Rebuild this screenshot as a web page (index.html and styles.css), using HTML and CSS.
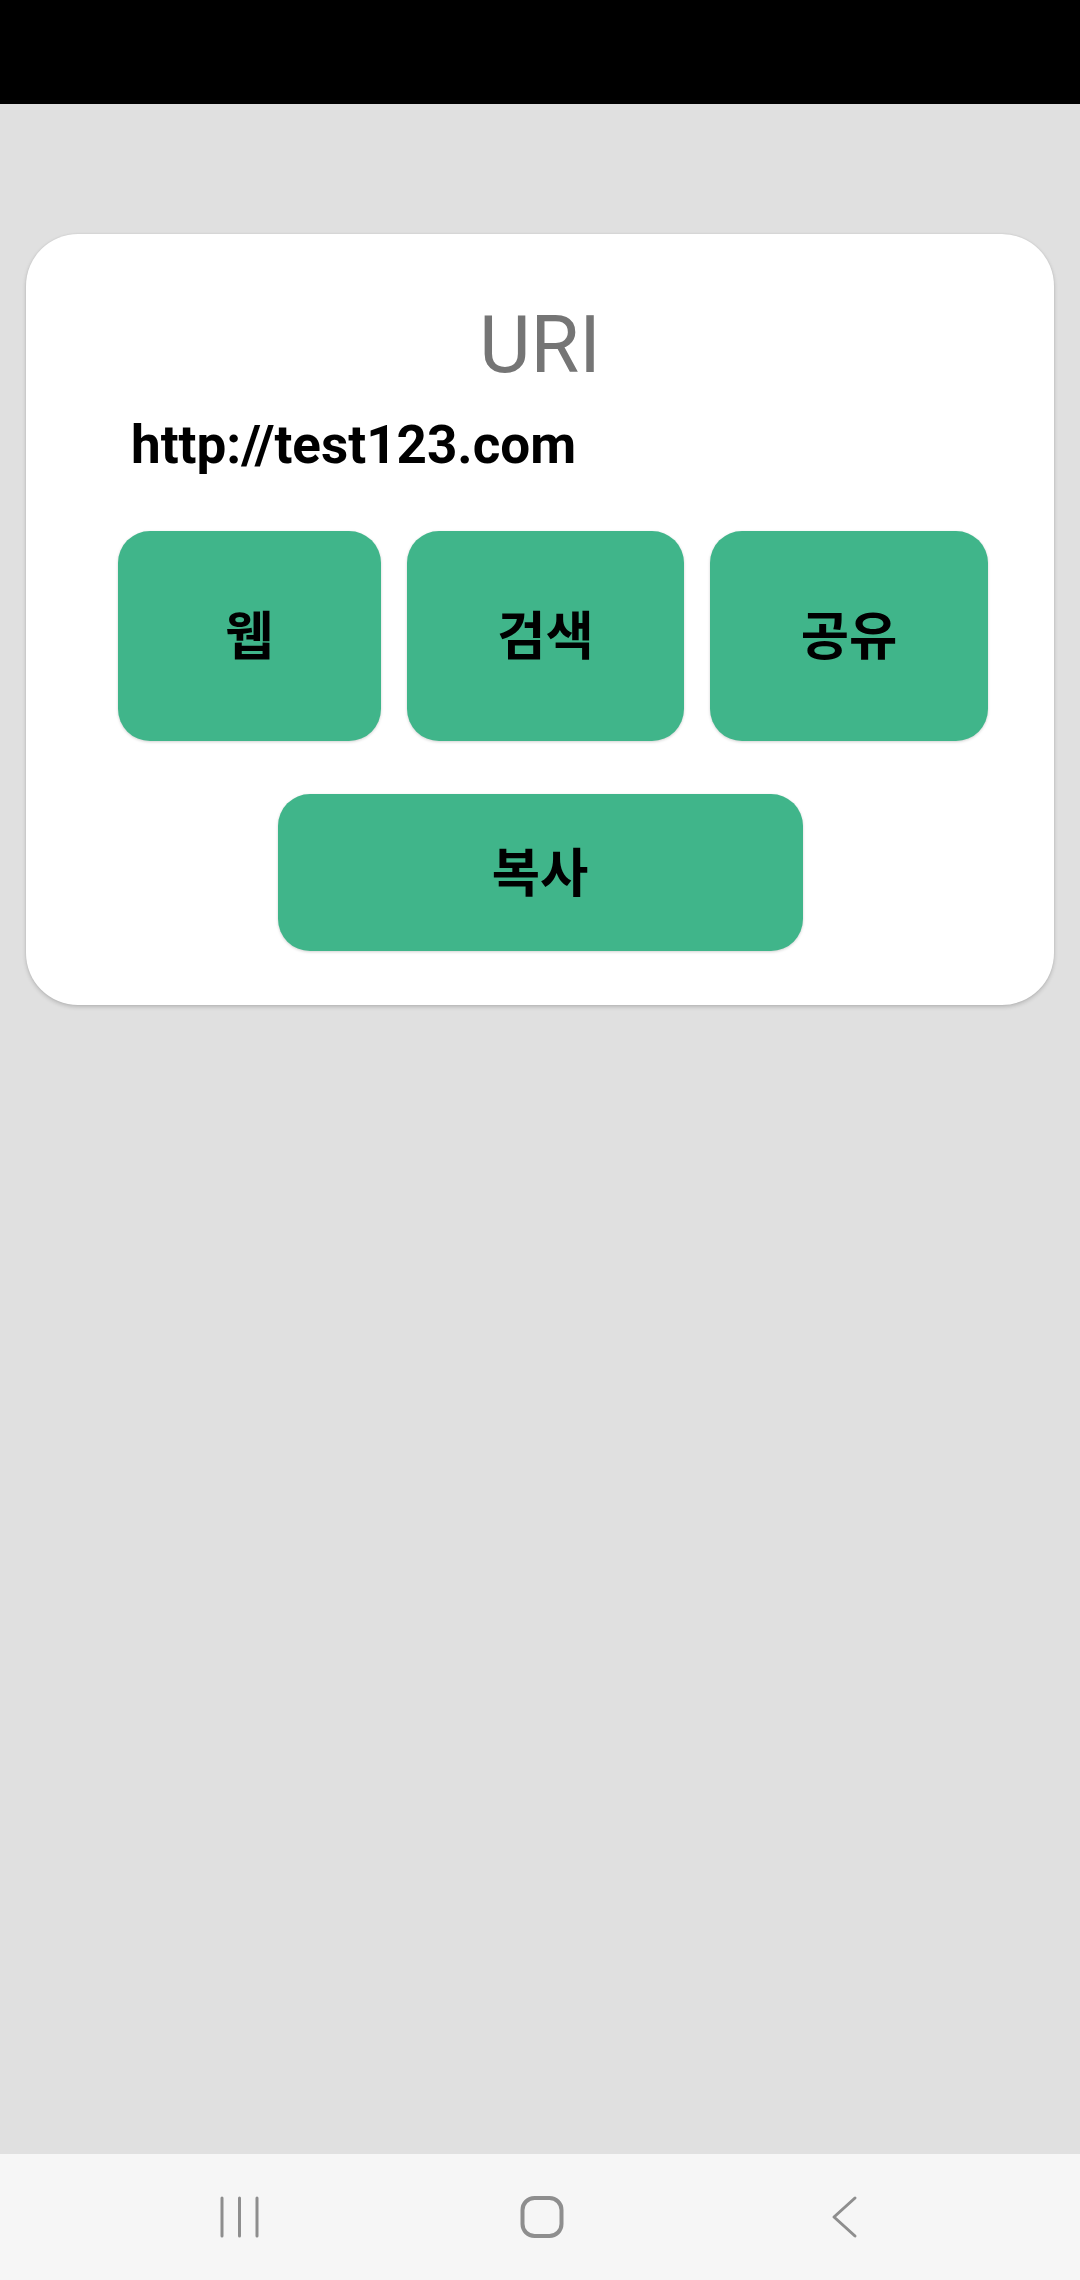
FILE: index.html
```html
<!DOCTYPE html>
<html lang="ko">
<head>
<meta charset="utf-8">
<title>URI</title>
<link rel="stylesheet" href="styles.css">
</head>
<body>
<div class="screen">
  <div class="status"></div>
  <main class="main">
    <section class="card">
      <h1 class="title">URI</h1>
      <p class="url">http://test123.com</p>
      <div class="row">
        <button class="btn btn-web">웹</button>
        <button class="btn btn-search">검색</button>
        <button class="btn btn-share">공유</button>
      </div>
      <button class="btn btn-copy">복사</button>
    </section>
  </main>
  <nav class="navbar">
    <div class="slot">
      <svg class="icon" width="48" height="48" viewBox="0 0 48 48">
        <path d="M7 5V43M24.5 5V43M42 5V43" fill="none" stroke="#8e8e8e" stroke-width="3" stroke-linecap="round"/>
      </svg>
    </div>
    <div class="slot">
      <svg class="icon" width="48" height="48" viewBox="0 0 48 48">
        <rect x="4.5" y="5" width="39" height="38" rx="12" fill="none" stroke="#8e8e8e" stroke-width="4"/>
      </svg>
    </div>
    <div class="slot">
      <svg class="icon" width="48" height="48" viewBox="0 0 48 48">
        <path d="M34 5L13 24L34 43" fill="none" stroke="#8e8e8e" stroke-width="3" stroke-linecap="round" stroke-linejoin="round"/>
      </svg>
    </div>
  </nav>
</div>
</body>
</html>
```

FILE: styles.css
```css
html, body {
  margin: 0;
  padding: 0;
}

body {
  width: 1080px;
  height: 2280px;
  overflow: hidden;
  font-family: Roboto, "Noto Sans CJK KR", sans-serif;
}

.screen {
  display: flex;
  flex-direction: column;
  height: 2280px;
}

.status {
  height: 104px;
  background: #000;
  flex: none;
}

.main {
  flex: 1;
  background: #e0e0e0;
  padding: 130px 26px 0;
}

.card {
  background: #fff;
  border-radius: 52px;
  padding: 65px 0 54px;
  box-shadow: 0 2px 4px rgba(0, 0, 0, 0.18), 0 0 2px rgba(0, 0, 0, 0.08);
}

.title {
  margin: 0;
  text-align: center;
  font-family: Roboto, sans-serif;
  font-weight: 400;
  font-size: 79px;
  line-height: 93px;
  color: #757575;
}

.url {
  margin: 22px 0 0;
  padding-left: 105px;
  font-family: Roboto, sans-serif;
  font-weight: 700;
  font-size: 53px;
  line-height: 62px;
  color: #000;
}

.row {
  display: flex;
  gap: 26px;
  margin-top: 55px;
  padding: 0 66px 0 92px;
}

.btn {
  border: 0;
  margin: 0;
  padding: 0 0 7px;
  background: #40b58a;
  border-radius: 32px;
  box-shadow: 0 1px 3px rgba(0, 0, 0, 0.18);
  display: flex;
  align-items: center;
  justify-content: center;
  font-family: "Noto Sans CJK KR", sans-serif;
  font-weight: 700;
  font-size: 52.5px;
  line-height: 1;
  color: #000;
}

.row .btn {
  height: 210px;
}

.btn-web {
  width: 263px;
}

.btn-search {
  width: 277px;
}

.btn-share {
  width: 278px;
}

.btn-copy {
  width: 525px;
  height: 157px;
  margin: 53px auto 0;
}

.navbar {
  height: 126px;
  flex: none;
  background: #f6f6f6;
  display: flex;
  align-items: center;
  padding-left: 87px;
}

.slot {
  width: 303px;
  display: flex;
  justify-content: center;
  align-items: center;
}

.icon {
  display: block;
}
```
